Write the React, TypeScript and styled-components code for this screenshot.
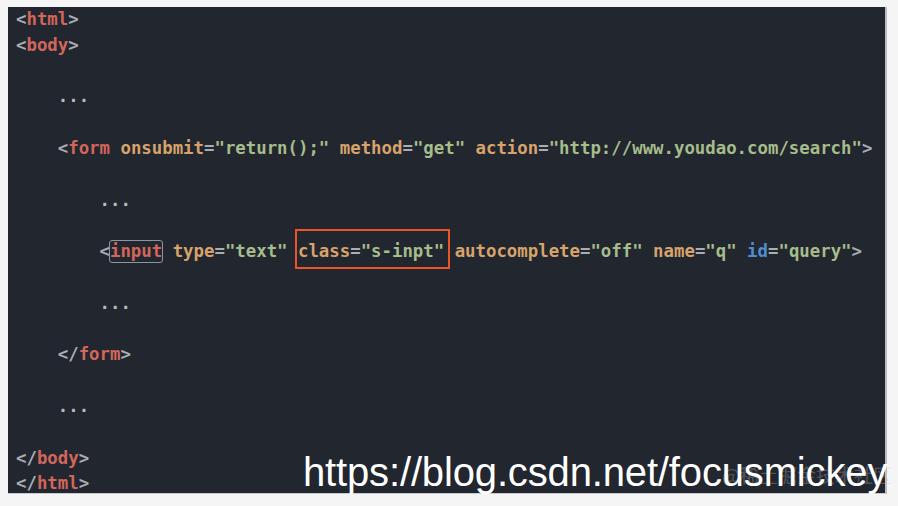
import styled, { createGlobalStyle } from 'styled-components';

const GlobalStyle = createGlobalStyle`
  html, body {
    margin: 0;
    padding: 0;
    background: #f5f5f5;
    width: 898px;
    height: 506px;
    overflow: hidden;
  }
`;

type Tone = 'punct' | 'tag' | 'attr' | 'str' | 'id' | 'dots';

const colors: Record<Tone, string> = {
  punct: '#a9aeb5',
  tag: '#d2665c',
  attr: '#d8a36a',
  str: '#a5bd8b',
  id: '#4d8ed4',
  dots: '#b7bcc2',
};

const Stage = styled.div`
  position: relative;
  width: 898px;
  height: 506px;
`;

const Panel = styled.div`
  position: absolute;
  left: 8px;
  top: 7px;
  width: 879px;
  height: 487px;
  background: #22262f;
  border-right: 2px solid #b9bcc0;
  border-bottom: 1px solid #c8cacd;
  box-sizing: border-box;
  padding: 0 0 0 8px;
`;

const Code = styled.pre`
  margin: 0;
  font-family: 'DejaVu Sans Mono', 'Liberation Mono', monospace;
  font-size: 17.35px;
  font-weight: bold;
  line-height: 25.8px;
  white-space: pre;
`;

const Line = styled.div<{ $indent: number }>`
  height: 25.8px;
  padding-left: ${(p) => p.$indent * 10.44}px;
`;

const Tok = styled.span<{ $tone: Tone }>`
  color: ${(p) => colors[p.$tone]};
`;

const Boxed = styled.span`
  position: relative;
  &::after {
    content: '';
    position: absolute;
    left: -1px;
    right: -1px;
    top: -1px;
    bottom: -2px;
    border: 1.5px solid #8b96a2;
    border-radius: 3px;
  }
`;

const Highlight = styled.span`
  position: relative;
  &::after {
    content: '';
    position: absolute;
    left: -3px;
    right: -6px;
    top: -12px;
    bottom: -8px;
    border: 2.5px solid #ea5428;
  }
`;

const Watermark = styled.div`
  position: absolute;
  left: 303px;
  top: 450px;
  font-family: 'Liberation Sans', Arial, sans-serif;
  font-size: 40px;
  color: #ffffff;
  letter-spacing: -0.15px;
  white-space: nowrap;
`;

const Faint = styled.div`
  position: absolute;
  left: 722px;
  top: 461px;
  font-family: 'Noto Sans CJK SC', sans-serif;
  font-size: 19px;
  color: rgba(200, 200, 200, 0.3);
  white-space: nowrap;
`;

const Dots = ({ indent }: { indent: number }) => (
  <Line $indent={indent}>
    <Tok $tone="dots">...</Tok>
  </Line>
);

const Blank = () => <Line $indent={0} />;

export default function App() {
  return (
    <>
      <GlobalStyle />
      <Stage>
        <Panel>
          <Code>
            <Line $indent={0}>
              <Tok $tone="punct">&lt;</Tok>
              <Tok $tone="tag">html</Tok>
              <Tok $tone="punct">&gt;</Tok>
            </Line>
            <Line $indent={0}>
              <Tok $tone="punct">&lt;</Tok>
              <Tok $tone="tag">body</Tok>
              <Tok $tone="punct">&gt;</Tok>
            </Line>
            <Blank />
            <Dots indent={4} />
            <Blank />
            <Line $indent={4}>
              <Tok $tone="punct">&lt;</Tok>
              <Tok $tone="tag">form</Tok>{' '}
              <Tok $tone="attr">onsubmit</Tok>
              <Tok $tone="punct">=</Tok>
              <Tok $tone="str">"return();"</Tok>{' '}
              <Tok $tone="attr">method</Tok>
              <Tok $tone="punct">=</Tok>
              <Tok $tone="str">"get"</Tok>{' '}
              <Tok $tone="attr">action</Tok>
              <Tok $tone="punct">=</Tok>
              <Tok $tone="str">"http://www.youdao.com/search"</Tok>
              <Tok $tone="punct">&gt;</Tok>
            </Line>
            <Blank />
            <Dots indent={8} />
            <Blank />
            <Line $indent={8}>
              <Tok $tone="punct">&lt;</Tok>
              <Boxed>
                <Tok $tone="tag">input</Tok>
              </Boxed>{' '}
              <Tok $tone="attr">type</Tok>
              <Tok $tone="punct">=</Tok>
              <Tok $tone="str">"text"</Tok>{' '}
              <Highlight>
                <Tok $tone="attr">class</Tok>
                <Tok $tone="punct">=</Tok>
                <Tok $tone="str">"s-inpt"</Tok>
              </Highlight>{' '}
              <Tok $tone="attr">autocomplete</Tok>
              <Tok $tone="punct">=</Tok>
              <Tok $tone="str">"off"</Tok>{' '}
              <Tok $tone="attr">name</Tok>
              <Tok $tone="punct">=</Tok>
              <Tok $tone="str">"q"</Tok>{' '}
              <Tok $tone="id">id</Tok>
              <Tok $tone="punct">=</Tok>
              <Tok $tone="str">"query"</Tok>
              <Tok $tone="punct">&gt;</Tok>
            </Line>
            <Blank />
            <Dots indent={8} />
            <Blank />
            <Line $indent={4}>
              <Tok $tone="punct">&lt;/</Tok>
              <Tok $tone="tag">form</Tok>
              <Tok $tone="punct">&gt;</Tok>
            </Line>
            <Blank />
            <Dots indent={4} />
            <Blank />
            <Line $indent={0}>
              <Tok $tone="punct">&lt;/</Tok>
              <Tok $tone="tag">body</Tok>
              <Tok $tone="punct">&gt;</Tok>
            </Line>
            <Line $indent={0}>
              <Tok $tone="punct">&lt;/</Tok>
              <Tok $tone="tag">html</Tok>
              <Tok $tone="punct">&gt;</Tok>
            </Line>
          </Code>
        </Panel>
        <Faint>@稀土掘金技术社区</Faint>
        <Watermark>https://blog.csdn.net/focusmickey</Watermark>
      </Stage>
    </>
  );
}
